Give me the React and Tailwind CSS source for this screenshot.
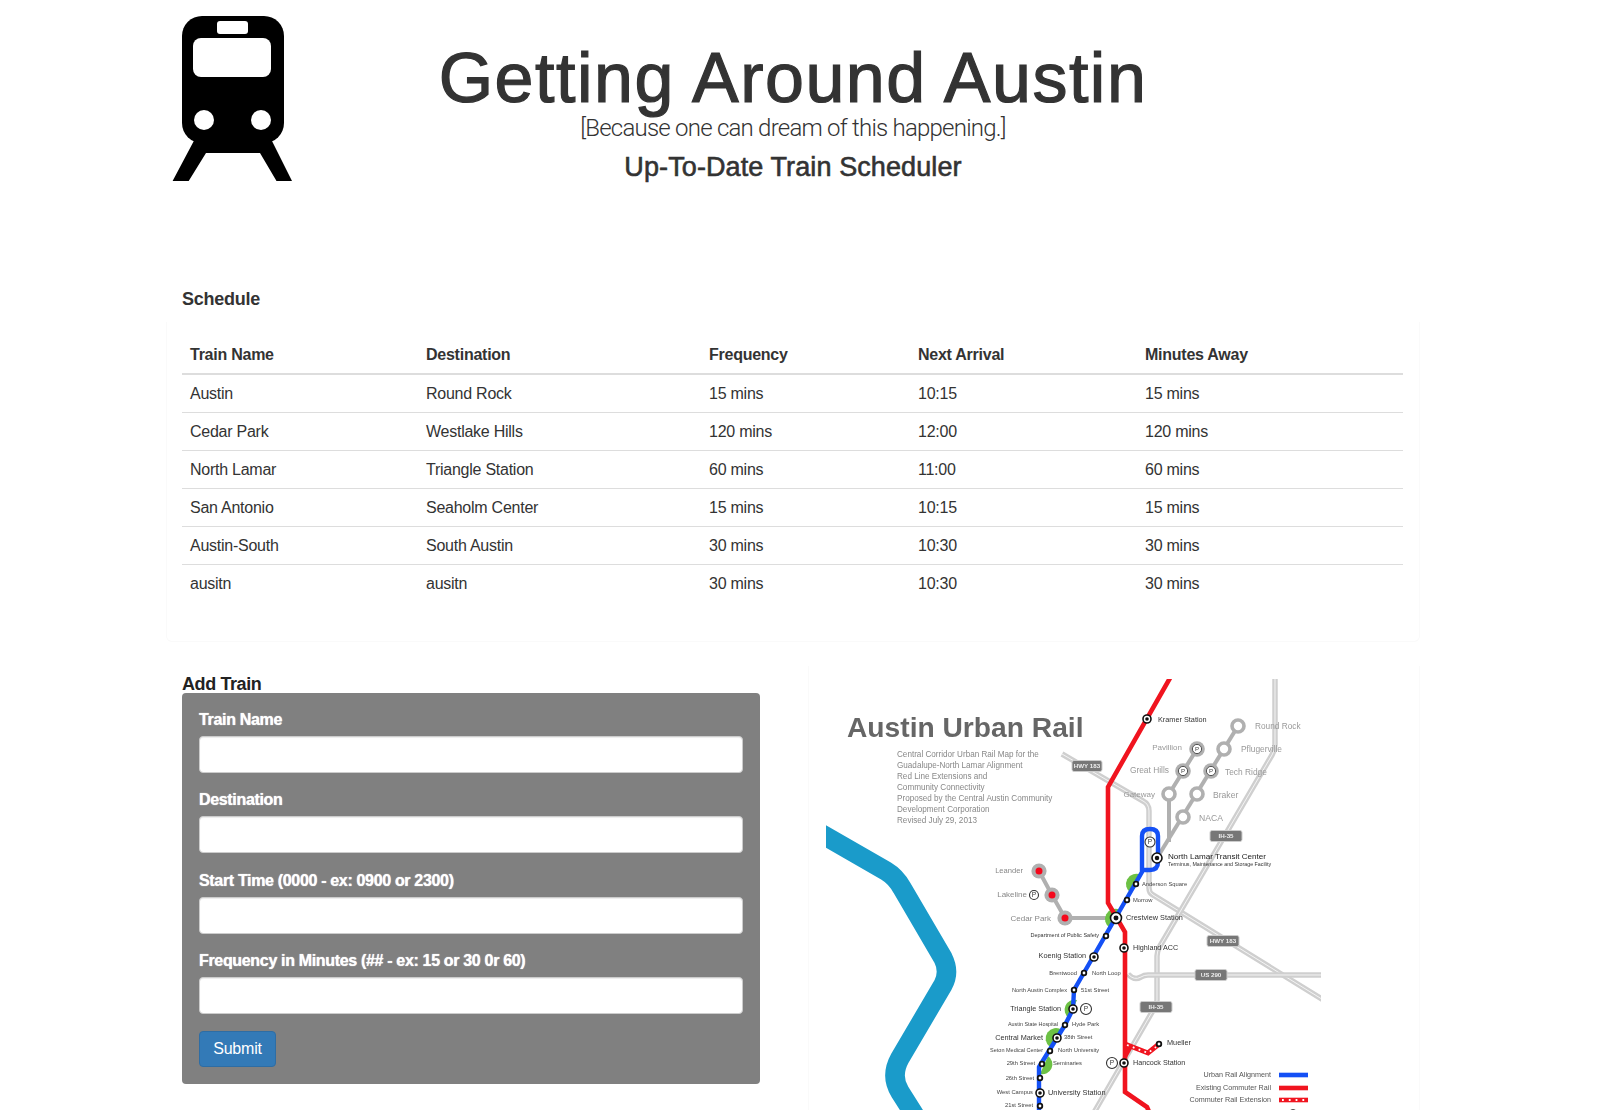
const rows = [
  ["Austin", "Round Rock", "15 mins", "10:15", "15 mins"],
  ["Cedar Park", "Westlake Hills", "120 mins", "12:00", "120 mins"],
  ["North Lamar", "Triangle Station", "60 mins", "11:00", "60 mins"],
  ["San Antonio", "Seaholm Center", "15 mins", "10:15", "15 mins"],
  ["Austin-South", "South Austin", "30 mins", "10:30", "30 mins"],
  ["ausitn", "ausitn", "30 mins", "10:30", "30 mins"],
];
const heads = ["Train Name", "Destination", "Frequency", "Next Arrival", "Minutes Away"];
const fields = [
  "Train Name",
  "Destination",
  "Start Time (0000 - ex: 0900 or 2300)",
  "Frequency in Minutes (## - ex: 15 or 30 0r 60)",
];

function TrainIcon() {
  return (
    <svg width="120" height="165" viewBox="172 16 120 165" className="block">
      <polygon points="197,135 172.6,181 188.7,181 206,153 260,153 276.5,181 292,181 269,135" fill="#000" />
      <rect x="182" y="16" width="102" height="127" rx="20" fill="#000" />
      <rect x="193" y="38" width="78" height="39" rx="8" fill="#fff" />
      <rect x="217" y="21" width="31" height="13" rx="3" fill="#fff" />
      <circle cx="204" cy="120" r="10" fill="#fff" />
      <circle cx="261" cy="120" r="10" fill="#fff" />
    </svg>
  );
}

const hwys = [
  "M1062 754 L1143 801 Q1149 804 1149 811 L1149 888 Q1149 893 1153 895 L1325 1001",
  "M1275 676 L1275 745 Q1275 750 1272 755 L1160 946 Q1157 951 1157 956 L1157 1000 Q1157 1004 1155 1007 L1092 1116",
  "M1128 974 Q1134 981 1141 977 Q1144 975 1148 975 L1325 975",
];
const badges = [
  [1087, 766, "HWY 183", 30],
  [1226, 836, "IH-35", 32],
  [1223, 941, "HWY 183", 32],
  [1211, 975, "US 290", 32],
  [1156, 1007, "IH-35", 32],
];
const smallStops = [
  [1136, 884], [1127, 900], [1106, 936], [1084, 973], [1074, 990], [1065, 1025],
  [1050, 1051], [1042, 1064], [1040, 1078], [1040, 1106], [1159, 1044],
];
const targets = [
  [1147, 719, 4], [1157, 858, 5], [1116, 918, 5.5], [1124, 948, 4], [1094, 957, 4],
  [1073, 1009, 4], [1057, 1038, 4], [1040, 1093, 4], [1124, 1063, 4], [1293, 1114, 4],
];
const pMarks = [[1150, 842, 5], [1086, 1009, 5.5], [1112, 1063, 5.5], [1034, 895, 4.5]];
const grayRings = [[1238, 726], [1224, 749], [1197, 794], [1183, 817], [1169, 794]];
const grayP = [[1197, 749], [1183, 771], [1211, 771]];
const redStations = [[1039, 871], [1052, 895], [1065, 918]];
const greens = [
  "M1131 893 A10.3 10.3 0 0 1 1141 875 Z",
  "M1110 928 A10.3 10.3 0 0 1 1120 910 Z",
  "M1069 1018 A10 10 0 0 1 1077 1000 Z",
  "M1050 1047 A10.3 10.3 0 0 1 1062 1030 Z",
  "M1048 1056 A10 10 0 0 1 1040 1074 Z",
];
// x, y, text, size, colour, anchor
const labels = [
  [1158, 722, "Kramer Station", 7.3, "#333", "start"],
  [1255, 729, "Round Rock", 8.3, "#999", "start"],
  [1241, 752, "Pflugerville", 8.4, "#999", "start"],
  [1225, 775, "Tech Ridge", 8.4, "#999", "start"],
  [1213, 798, "Braker", 8.6, "#999", "start"],
  [1199, 821, "NACA", 8.6, "#999", "start"],
  [1182, 750, "Pavillion", 8, "#999", "end"],
  [1169, 773, "Great Hills", 8.4, "#999", "end"],
  [1155, 797, "Gateway", 8, "#999", "end"],
  [1168, 859, "North Lamar Transit Center", 8.1, "#222", "start"],
  [1168, 865.5, "Terminus, Maintenance and Storage Facility", 5.3, "#333", "start"],
  [1142, 886, "Anderson Square", 5.8, "#444", "start"],
  [1133, 902, "Morrow", 5.8, "#444", "start"],
  [1126, 920, "Crestview Station", 7.3, "#333", "start"],
  [1099, 937, "Department of Public Safety", 5.5, "#333", "end"],
  [1133, 950, "Highland ACC", 7.2, "#333", "start"],
  [1086, 958, "Koenig Station", 7.3, "#333", "end"],
  [1077, 975, "Brentwood", 5.8, "#444", "end"],
  [1092, 975, "North Loop", 5.8, "#444", "start"],
  [1067, 992, "North Austin Complex", 5.7, "#444", "end"],
  [1081, 992, "51st Street", 5.8, "#444", "start"],
  [1061, 1011, "Triangle Station", 7.3, "#333", "end"],
  [1058, 1026, "Austin State Hospital", 5.4, "#444", "end"],
  [1072, 1026, "Hyde Park", 5.8, "#444", "start"],
  [1043, 1040, "Central Market", 7.3, "#333", "end"],
  [1064, 1039, "38th Street", 5.8, "#444", "start"],
  [1043, 1052, "Seton Medical Center", 5.5, "#444", "end"],
  [1058, 1052, "North University", 5.8, "#444", "start"],
  [1035, 1065, "29th Street", 5.8, "#444", "end"],
  [1053, 1065, "Seminaries", 5.8, "#444", "start"],
  [1034, 1080, "26th Street", 5.8, "#444", "end"],
  [1033, 1094, "West Campus", 5.8, "#444", "end"],
  [1048, 1095, "University Station", 7.4, "#333", "start"],
  [1033, 1107, "21st Street", 5.8, "#444", "end"],
  [1167, 1045, "Mueller", 7.3, "#333", "start"],
  [1133, 1065, "Hancock Station", 7.2, "#333", "start"],
  [1271, 1077, "Urban Rail Alignment", 7.2, "#555", "end"],
  [1271, 1090, "Existing Commuter Rail", 7.2, "#555", "end"],
  [1271, 1102, "Commuter Rail Extension", 7.2, "#555", "end"],
  [1023, 873, "Leander", 7.6, "#888", "end"],
  [1027, 897, "Lakeline", 8, "#888", "end"],
  [1051, 921, "Cedar Park", 8, "#888", "end"],
];
const intro = [
  "Central Corridor Urban Rail Map for the",
  "Guadalupe-North Lamar Alignment",
  "Red Line Extensions and",
  "Community Connectivity",
  "Proposed by the Central Austin Community",
  "Development Corporation",
  "Revised July 29, 2013",
];

function RailMap() {
  const red = "#f0141f";
  const blue = "#1450f5";
  return (
    <svg width="495" height="431" viewBox="826 679 495 431" className="block blur-[0.45px]" fontFamily="'Liberation Sans', Arial, sans-serif">
      <path d="M820 833 L886 871 Q896 877 902 888 L943 958 Q950 972 943 985 L900 1058 Q890 1076 900 1092 L919 1122" fill="none" stroke="#1a9bca" strokeWidth="19.5" />

      {hwys.map((d) => (
        <g key={d} fill="none">
          <path d={d} stroke="#cfcfcf" strokeWidth="5.5" />
          <path d={d} stroke="#f4f4f4" strokeWidth="1" />
        </g>
      ))}
      {badges.map(([x, y, t, w], i) => (
        <g key={i}>
          <rect x={x - w / 2} y={y - 5.5} width={w} height="11" rx="2" fill="#777" stroke="#ccc" strokeWidth="1" />
          <text x={x} y={y + 2.3} textAnchor="middle" fontSize="6.2" fontWeight="700" fill="#eee">{t}</text>
        </g>
      ))}

      <g fill="none" stroke="#b0b0b0" strokeWidth="4">
        <path d="M1157 858 L1238 726" />
        <path d="M1169 842 L1169 794 L1197 749" />
        <path d="M1039 871 L1052 895 L1065 918 L1116 918" />
      </g>

      {greens.map((d) => <path key={d} d={d} fill="#6cc144" />)}

      <path d="M1170 678 L1108 787 L1108 903 L1125 932 L1125 1092 L1147 1107 L1150 1114" fill="none" stroke={red} strokeWidth="4.6" />
      <path d="M1125 1044 L1148 1053 L1159 1044 M1125 1056 L1130 1047" fill="none" stroke={red} strokeWidth="5" />
      <path d="M1127 1045 L1148 1053 L1156 1047" fill="none" stroke="#fff" strokeWidth="1.8" strokeDasharray="1.8 4.4" />

      <path
        d="M1039 1112 L1039 1067 L1065 1025 L1073 1009 L1074 990 L1142 872 L1142 836 Q1142 829 1150 829 Q1158 829 1158 836 L1158 862 Q1158 870 1150 870 L1142 870"
        fill="none" stroke={blue} strokeWidth="4.4" strokeLinejoin="round"
      />

      {grayRings.map(([x, y], i) => (
        <circle key={i} cx={x} cy={y} r="6" fill="#fff" stroke="#b0b0b0" strokeWidth="3.6" />
      ))}
      {grayP.map(([x, y], i) => (
        <g key={i}>
          <circle cx={x} cy={y} r="7.8" fill="#b0b0b0" />
          <circle cx={x} cy={y} r="4.6" fill="#fff" stroke="#444" strokeWidth="0.9" />
          <text x={x} y={y + 2.3} textAnchor="middle" fontSize="6.2" fill="#444">P</text>
        </g>
      ))}
      {redStations.map(([x, y], i) => (
        <g key={i}>
          <circle cx={x} cy={y} r="7.6" fill="#b0b0b0" />
          <circle cx={x} cy={y} r="3.5" fill="#f5081c" />
        </g>
      ))}
      {pMarks.map(([x, y, r], i) => (
        <g key={i}>
          <circle cx={x} cy={y} r={r} fill="#fff" stroke="#333" strokeWidth="1.1" />
          <text x={x} y={y + 2.4} textAnchor="middle" fontSize="6.6" fill="#333">P</text>
        </g>
      ))}
      {smallStops.map(([x, y], i) => (
        <circle key={i} cx={x} cy={y} r="2.3" fill="#fff" stroke="#111" strokeWidth="1.8" />
      ))}
      {targets.map(([x, y, r], i) => (
        <g key={i}>
          <circle cx={x} cy={y} r={r} fill="#fff" stroke="#111" strokeWidth="1.6" />
          <circle cx={x} cy={y} r={r * 0.45} fill="#111" />
        </g>
      ))}

      <rect x="1279" y="1072.7" width="29" height="4.6" fill={blue} />
      <rect x="1279" y="1085.7" width="29" height="4.6" fill={red} />
      <rect x="1279" y="1097.7" width="29" height="4.6" fill={red} />
      <path d="M1282 1100 L1306 1100" stroke="#fff" strokeWidth="1.8" strokeDasharray="1.8 5" />

      <text x="847" y="737" fontSize="28.2" fontWeight="700" fill="#666">Austin Urban Rail</text>
      {intro.map((t, i) => (
        <text key={t} x="897" y={757 + i * 11} fontSize="8.13" fill="#888">{t}</text>
      ))}
      {labels.map(([x, y, t, s, c, a]) => (
        <text key={t} x={x} y={y} fontSize={s} fill={c} textAnchor={a}>{t}</text>
      ))}
    </svg>
  );
}

export default function App() {
  return (
    <div className="h-[1110px] overflow-hidden bg-white text-[#333] font-['Liberation_Sans',Arial,sans-serif]">
      <div className="ml-[166px] w-[1254px]">
        <header className="grid h-[289px] grid-cols-[1fr_auto_1fr]">
          <div className="pl-[6px] pt-[16px]">
            <TrainIcon />
          </div>
          <div className="text-center">
            <h1 className="mt-[40px] h-[76px] text-[70px] leading-[76px] tracking-[1.5px] [-webkit-text-stroke:1.2px_#333]">Getting Around Austin</h1>
            <p className="-mt-[2px] h-[28px] font-['Roboto',sans-serif] text-[24px] leading-[28px] font-light tracking-[-0.77px]">[Because one can dream of this happening.]</p>
            <h3 className="mt-[9px] text-[27px] leading-[32px] tracking-[0.1px] [-webkit-text-stroke:0.6px_#333]">Up-To-Date Train Scheduler</h3>
          </div>
          <div />
        </header>

        <h4 className="ml-[16px] h-[20px] text-[18px] leading-[20px] font-bold tracking-[-0.25px]">Schedule</h4>

        <section className="mt-[13px] rounded-b-[6px] border-x border-b border-[#fafafa] pl-[15px] pr-[16px] pt-[20px] pb-[39px]">
          <table className="w-[1221px] table-fixed border-separate border-spacing-0 text-[16px] tracking-[-0.25px]">
            <colgroup>
              <col className="w-[236px]" />
              <col className="w-[283px]" />
              <col className="w-[209px]" />
              <col className="w-[227px]" />
              <col className="w-[266px]" />
            </colgroup>
            <thead>
              <tr>
                {heads.map((h) => (
                  <th key={h} className="h-[33px] border-b-2 border-[#ddd] pb-[7px] pl-[8px] text-left align-bottom font-bold leading-[22px]">{h}</th>
                ))}
              </tr>
            </thead>
            <tbody>
              {rows.map((r, i) => (
                <tr key={i}>
                  {r.map((c, j) => (
                    <td key={j} className={i === 0 ? "h-[37px] pl-[8px] align-middle" : "h-[38px] border-t border-[#ddd] pl-[8px] align-middle"}>{c}</td>
                  ))}
                </tr>
              ))}
            </tbody>
          </table>
        </section>

        <section className="mt-[24px] flex h-[444px]">
          <div className="ml-[16px] w-[578px] pt-[8px]">
            <h4 className="h-[19px] text-[18px] leading-[20px] font-bold tracking-[-0.4px] text-[#222]">Add Train</h4>
            <form className="rounded-[4px] bg-[#808080] px-[17px] pt-[16px] pb-[17px]">
              {fields.map((f) => (
                <div key={f} className="mb-[16.33px]">
                  <label className="mb-[5px] block h-[22px] text-[16px] leading-[22px] font-bold tracking-[-0.33px] text-white [text-shadow:0_0_1px_#fff]">{f}</label>
                  <input type="text" className="block h-[37px] w-full rounded-[4px] border border-[#ccc] bg-white shadow-[inset_0_1px_1px_rgba(0,0,0,0.075)]" />
                </div>
              ))}
              <button type="button" className="mt-[17.33px] block h-[36px] w-[77px] rounded-[4px] border border-[#2e6da4] bg-[#337ab7] text-[16px] tracking-[-0.2px] text-white">Submit</button>
            </form>
          </div>
          <div className="ml-[48px] flex-1 border-x border-[#fafafa] pl-[17px] pt-[13px]">
            <RailMap />
          </div>
        </section>
      </div>
    </div>
  );
}
